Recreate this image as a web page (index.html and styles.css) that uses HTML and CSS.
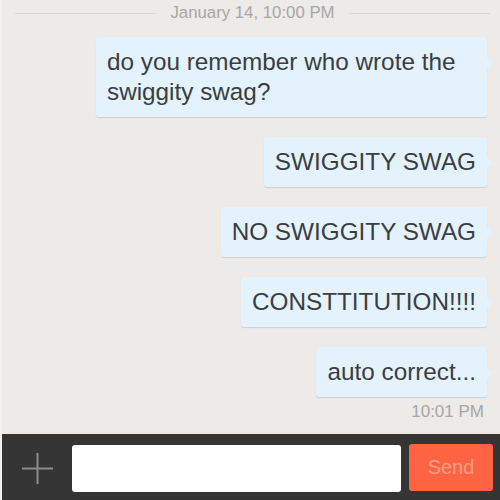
FILE: index.html
```html
<!DOCTYPE html>
<html>
<head>
<meta charset="utf-8">
<link rel="stylesheet" href="styles.css">
</head>
<body>
<div class="screen">
  <div class="messages">
    <div class="date-row">
      <span class="rule"></span>
      <span class="date">January 14, 10:00 PM</span>
      <span class="rule"></span>
    </div>
    <div class="thread">
      <div class="bubble">do you remember who wrote the swiggity swag?</div>
      <div class="bubble">SWIGGITY SWAG</div>
      <div class="bubble">NO SWIGGITY SWAG</div>
      <div class="bubble">CONSTTITUTION!!!!</div>
      <div class="bubble">auto correct...</div>
      <div class="time">10:01 PM</div>
    </div>
  </div>
  <div class="composer">
    <div class="plus">
      <svg width="31" height="31" viewBox="0 0 31 31"><path d="M15.5 0V31M0 15.5H31" stroke="#8c8c8c" stroke-width="2" fill="none"/></svg>
    </div>
    <div class="input"></div>
    <div class="send">Send</div>
  </div>
</div>
</body>
</html>
```
FILE: styles.css
```css
html, body {
  margin: 0;
  padding: 0;
}
body {
  font-family: "Liberation Sans", Arial, sans-serif;
  background: #edeae7;
}
.screen {
  width: 500px;
  height: 500px;
  display: flex;
  flex-direction: column;
  box-sizing: border-box;
  border-left: 2px solid #f4f2f0;
  overflow: hidden;
}
.messages {
  flex: 1;
  display: flex;
  flex-direction: column;
}
.date-row {
  height: 26px;
  display: flex;
  align-items: center;
  padding: 0 10px 0 13px;
  gap: 14px;
}
.rule {
  flex: 1;
  height: 1px;
  background: #d9d6d3;
}
.date {
  font-size: 16.8px;
  line-height: 26px;
  color: #a7a7a7;
}
.thread {
  display: flex;
  flex-direction: column;
  align-items: flex-end;
  padding: 11px 13px 0 0;
  gap: 20px;
}
.bubble {
  position: relative;
  max-width: 391px;
  box-sizing: border-box;
  padding: 10px 11px 10px 11px;
  background: #e3f2fc;
  border-radius: 3px;
  box-shadow: 0 1px 1px rgba(0, 0, 0, 0.12);
  font-size: 24.3px;
  line-height: 30px;
  color: #3b3e41;
}
.bubble::after {
  content: "";
  position: absolute;
  right: -6px;
  top: 20px;
  border-top: 6px solid transparent;
  border-bottom: 6px solid transparent;
  border-left: 6px solid #e3f2fc;
}
.time {
  margin-top: -15px;
  margin-right: 3px;
  font-size: 17px;
  line-height: 20px;
  color: #a7a7a7;
}
.composer {
  height: 66px;
  background: #353535;
  display: flex;
  align-items: center;
  padding-left: 20px;
}
.plus {
  width: 31px;
  height: 31px;
  margin-top: 2px;
}
.plus svg {
  display: block;
}
.input {
  width: 329px;
  height: 47px;
  margin-left: 19px;
  margin-top: 2px;
  background: #ffffff;
  border-radius: 3px;
}
.send {
  width: 84px;
  height: 47px;
  margin-left: 8px;
  background: #fe6443;
  border-radius: 3px;
  color: #ff9d84;
  font-size: 20px;
  line-height: 47px;
  text-align: center;
}
```
